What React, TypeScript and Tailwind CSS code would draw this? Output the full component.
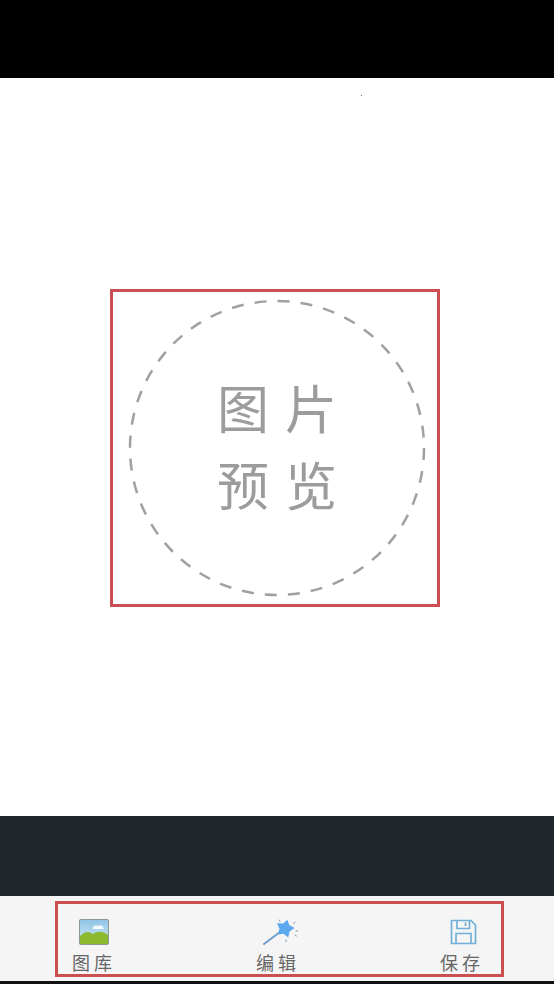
import React from 'react'

const cjk = { fontFamily: '"Noto Sans CJK SC", "Noto Sans", sans-serif' }

const GalleryIcon = () => (
    <svg width="30" height="26" viewBox="0 0 30 26" className="block">
        <defs>
            <linearGradient id="sky" x1="0" y1="0" x2="0" y2="1">
                <stop offset="0" stopColor="#8fc3e6" />
                <stop offset="1" stopColor="#d6ecf5" />
            </linearGradient>
        </defs>
        <rect x="0.5" y="0.5" width="29" height="25" rx="1" fill="url(#sky)" stroke="#8a9a8e" />
        <path d="M1 17 C6 12 10 12 14 15 C18 12 24 12 29 16 V25 H1 Z" fill="#8bb92f" />
        <path d="M14 8.5 C15 6 18 6.5 19 7 C21 5.5 24 6.5 24 8.5 C25 9 25 10 24 10 H15 C14 10 13.500 9 14 8.500 Z" fill="#ffffff" opacity="0.9" />
    </svg>
)

const WandIcon = () => (
    <svg width="36" height="26" viewBox="0 0 36 26" className="block">
        <path d="M2 25 L16 14.500" stroke="#6f9fca" strokeWidth="2" strokeLinecap="round" />
        <path d="M25.300 0.800 L27.300 6 L32.500 9 L27.600 12.500 L26.200 18.500 L21.600 14.800 L15.500 15.500 L17.500 9.800 L15 4.200 L21 4.400 Z" fill="#5ba8ee" />
        <path d="M17 1 L18 2.500 M33 3 L31.500 4.500 M35.500 12 H34 M34.500 17 L33 16 M24 21 V22.500" stroke="#7d9db5" strokeWidth="1" strokeLinecap="round" />
    </svg>
)

const SaveIcon = () => (
    <svg width="27" height="26" viewBox="0 0 27 26" fill="none" stroke="#72b0d8" strokeWidth="1.700" className="block">
        <path d="M1.500 1.500 H21 L25.500 6 V24.500 H1.500 Z" strokeLinejoin="round" />
        <path d="M7 1.500 V9.500 H19.500 V1.500" />
        <path d="M15.500 3.500 V7" />
        <path d="M6 24.500 V14.500 H21 V24.500" />
    </svg>
)

const items = [
    { label: '图库', icon: <GalleryIcon />, iconClass: 'ml-[2px]' },
    { label: '编辑', icon: <WandIcon />, iconClass: 'ml-[5px]' },
    { label: '保存', icon: <SaveIcon />, iconClass: 'ml-[4px]' },
]

export default function App() {
    return (
        <div className="w-[554px] h-[984px] flex flex-col overflow-hidden bg-black" style={cjk}>
            <div className="h-[78px] bg-black" />

            {/* Preview area */}
            <div className="relative h-[738px] bg-white flex items-center justify-center">
                <span className="absolute left-[361px] top-[17px] w-px h-px bg-[#777777]" />
                <div className="w-[330px] h-[318px] mt-[2px] mr-[4px] border-[3px] border-[#cb4f52] flex items-center justify-center pl-[4px]">
                    <div className="relative w-[298px] h-[298px] pb-[6px] flex flex-col items-center justify-center text-[#9c9c9c] text-[52px] leading-[77px] tracking-[16px]">
                        <svg width="298" height="298" viewBox="0 0 298 298" className="absolute inset-0">
                            <circle cx="149" cy="149" r="147" fill="none" stroke="#a0a0a0" strokeWidth="2.500" strokeDasharray="12 11.100" />
                        </svg>
                        <span className="pl-[16px]">图片</span>
                        <span className="pl-[16px]">预览</span>
                    </div>
                </div>
            </div>

            <div className="h-[80px] bg-[#20282b]" />

            {/* Bottom toolbar */}
            <div className="h-[85px] bg-[#f5f5f5] pt-[5px] pl-[55px]">
                <div className="w-[449px] h-[76px] border-[3px] border-[#c9504f] flex justify-between pl-[14px] pr-[19px] pt-[15px]">
                    {items.map((item) => (
                        <div key={item.label} className="w-[42px] flex flex-col items-center">
                            <div className={`h-[26px] flex items-center justify-center ${item.iconClass}`}>{item.icon}</div>
                            <span className="text-[#666666] text-[18px] leading-[20px] tracking-[4px] pl-[2px] mt-[7px] whitespace-nowrap">{item.label}</span>
                        </div>
                    ))}
                </div>
            </div>

            <div className="h-[3px] bg-[#111111]" />
        </div>
    )
}
